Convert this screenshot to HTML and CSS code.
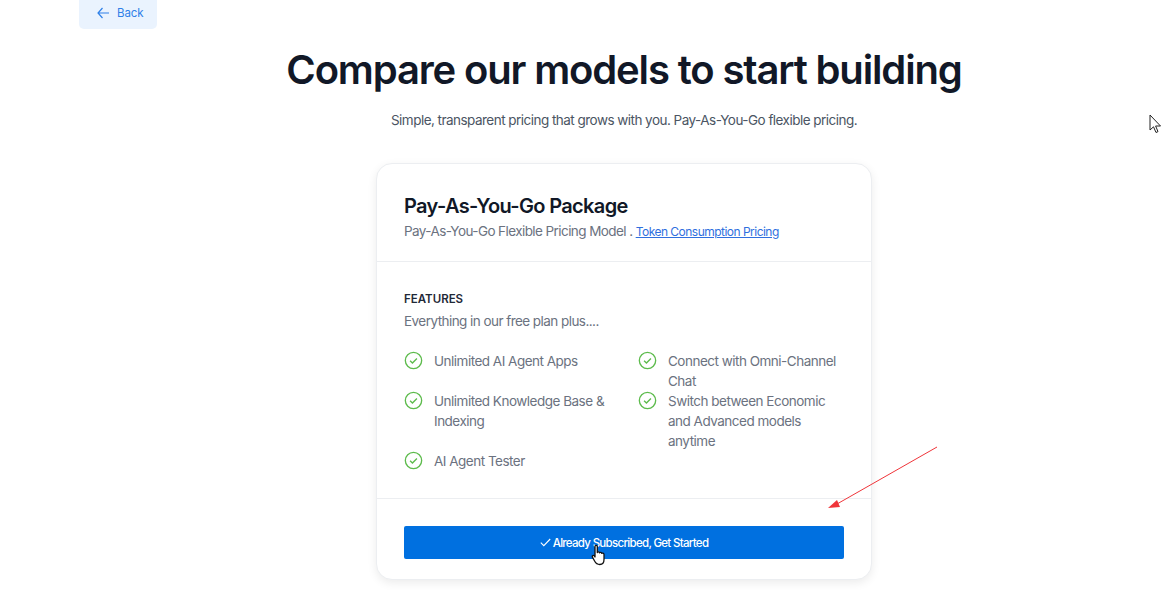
FILE: index.html
```html
<!DOCTYPE html>
<html lang="en">
<head>
  <meta charset="UTF-8" />
  <title>Compare our models</title>
  <link rel="stylesheet" href="styles.css">
</head>
<body>
  <div class="topbar">
    <a class="back" href="#">
      <svg width="14" height="14" viewBox="0 0 14 14" fill="none" stroke="#2f80e8" stroke-width="1.2"><path d="M13 7H2M6.5 2 2 7l4.5 5"/></svg>
      <span>Back</span>
    </a>
  </div>

  <div class="main">
    <h1>Compare our models to start building</h1>
    <p class="lead">Simple, transparent pricing that grows with you. Pay-As-You-Go flexible pricing.</p>

    <div class="card">
      <div class="card-head">
        <h2>Pay-As-You-Go Package</h2>
        <p>Pay-As-You-Go Flexible Pricing Model . <a href="#">Token Consumption Pricing</a></p>
      </div>

      <div class="card-body">
        <h3>FEATURES</h3>
        <p class="sub">Everything in our free plan plus....</p>
        <ul class="features">
          <li>
            <svg viewBox="0 0 20 20" fill="none" stroke="#5dbb4c" stroke-width="1.4"><circle cx="10" cy="10" r="8.6"/><path d="M6.4 10.2 8.9 12.6 13.6 7.8"/></svg>
            <span>Unlimited AI Agent Apps</span>
          </li>
          <li>
            <svg viewBox="0 0 20 20" fill="none" stroke="#5dbb4c" stroke-width="1.4"><circle cx="10" cy="10" r="8.6"/><path d="M6.4 10.2 8.9 12.6 13.6 7.8"/></svg>
            <span>Connect with Omni-Channel Chat</span>
          </li>
          <li>
            <svg viewBox="0 0 20 20" fill="none" stroke="#5dbb4c" stroke-width="1.4"><circle cx="10" cy="10" r="8.6"/><path d="M6.4 10.2 8.9 12.6 13.6 7.8"/></svg>
            <span>Unlimited Knowledge Base &amp; Indexing</span>
          </li>
          <li>
            <svg viewBox="0 0 20 20" fill="none" stroke="#5dbb4c" stroke-width="1.4"><circle cx="10" cy="10" r="8.6"/><path d="M6.4 10.2 8.9 12.6 13.6 7.8"/></svg>
            <span>Switch between Economic and Advanced models anytime</span>
          </li>
          <li>
            <svg viewBox="0 0 20 20" fill="none" stroke="#5dbb4c" stroke-width="1.4"><circle cx="10" cy="10" r="8.6"/><path d="M6.4 10.2 8.9 12.6 13.6 7.8"/></svg>
            <span>AI Agent Tester</span>
          </li>
        </ul>
      </div>

      <div class="card-foot">
        <button class="start">
          <svg width="11" height="9" viewBox="0 0 11 9" fill="none" stroke="#fff" stroke-width="1.1"><path d="M.8 4.6 3.8 7.6 10.2 1"/></svg>
          Already Subscribed, Get Started
        </button>
      </div>
    </div>
  </div>

  <!-- annotation arrow and captured cursors, on top of the page -->
  <svg class="arrow" width="120" height="70" viewBox="0 0 120 70" fill="none">
    <path d="M112 2 12 59" stroke="#f0353a" stroke-width="1"/>
    <path d="M3 63 12 55 15 62Z" fill="#f0353a"/>
  </svg>
  <svg class="cursor-arrow" width="14" height="22" viewBox="0 0 14 22" fill="#fff" stroke="#222" stroke-width="1"><path d="M1 1V16L4.5 12.8 7 18.5 9 17.6 6.6 12H11.5Z"/></svg>
  <svg class="cursor-hand" width="16" height="22" viewBox="0 0 16 22" fill="#fff" stroke="#111" stroke-width="1.3" stroke-linejoin="round"><path d="M4 13V2.6C4 .9 6.3.9 6.3 2.6V8.5C6.5 7.5 8.4 7.5 8.6 8.8 8.9 8 10.6 8.1 10.8 9.4 11.2 8.8 13 9 13 10.6V15.5C13 18.5 11.5 20.5 8.8 20.5 6 20.5 4.8 19.3 3.6 17L1.4 13.2C.7 11.8 2.4 10.8 3.3 11.9Z"/></svg>
</body>
</html>
```

FILE: styles.css
```css
html, body {
  height: 590px;
}

body {
  margin: 0;
  overflow: hidden;
  position: relative;
  background: #fff;
  color: #111827;
  font-family: 'Inter', sans-serif;
}

.topbar {
  padding-left: 79px;
  height: 29px;
}

.back {
  display: inline-flex;
  align-items: center;
  gap: 7px;
  width: 78px;
  height: 29px;
  box-sizing: border-box;
  padding: 0 0 4px 17px;
  background: #eaf3fe;
  border-radius: 0 0 5px 5px;
  color: #2f80e8;
  font-size: 11.5px;
  letter-spacing: -0.1px;
  text-decoration: none;
}

.main {
  margin-left: 86px;
  width: 1076px;
  display: flex;
  flex-direction: column;
  align-items: center;
}

h1 {
  margin: 16px 0 0;
  font-size: 40px;
  line-height: 50px;
  font-weight: 600;
  letter-spacing: -1.15px;
  color: #111827;
  white-space: nowrap;
}

.lead {
  margin: 15px 0 0;
  font-size: 13.5px;
  line-height: 20px;
  letter-spacing: -0.53px;
  color: #4b5563;
}

.card {
  margin-top: 33px;
  width: 496px;
  box-sizing: border-box;
  border: 1px solid #eceef1;
  border-radius: 16px;
  box-shadow: 0 3px 10px rgba(0, 0, 0, 0.08);
  background: #fff;
}

.card-head {
  padding: 28px 27px 19px;
  border-bottom: 1px solid #eceef1;
}

h2 {
  margin: 0;
  font-size: 20px;
  line-height: 28px;
  font-weight: 600;
  letter-spacing: -0.65px;
}

.card-head p {
  margin: 1px 0 0;
  font-size: 13.5px;
  line-height: 20px;
  letter-spacing: -0.58px;
  color: #6b7280;
}

.card-head a {
  color: #2f6fde;
  font-size: 12px;
  letter-spacing: -0.52px;
}

.card-body {
  padding: 28px 27px 27px;
  border-bottom: 1px solid #eceef1;
}

h3 {
  margin: 0;
  font-size: 11.5px;
  line-height: 18px;
  font-weight: 600;
  color: #1f2937;
}

.sub {
  margin: 3px 0 0;
  font-size: 13.5px;
  line-height: 20px;
  letter-spacing: -0.55px;
  color: #6b7280;
}

.features {
  list-style: none;
  margin: 20px 0 0;
  padding: 0;
  display: grid;
  grid-template-columns: 234px 1fr;
  font-size: 13.5px;
  line-height: 20px;
  letter-spacing: -0.5px;
  color: #6b7280;
}

.features li {
  display: flex;
  gap: 11px;
}

.features span {
  flex: 1;
}

.features svg {
  width: 19px;
  height: 19px;
  flex: none;
}

.card-foot {
  padding: 27px 27px 20px;
}

.start {
  display: flex;
  align-items: center;
  justify-content: center;
  gap: 2px;
  width: 100%;
  height: 33px;
  border: none;
  border-radius: 2px;
  background: #0070e0;
  color: #fff;
  font-family: inherit;
  font-size: 11.5px;
  font-weight: 500;
  letter-spacing: -0.7px;
}

.arrow {
  position: absolute;
  left: 825px;
  top: 445px;
}

.cursor-arrow {
  position: absolute;
  left: 1149px;
  top: 114px;
}

.cursor-hand {
  position: absolute;
  left: 591px;
  top: 544px;
}
```
